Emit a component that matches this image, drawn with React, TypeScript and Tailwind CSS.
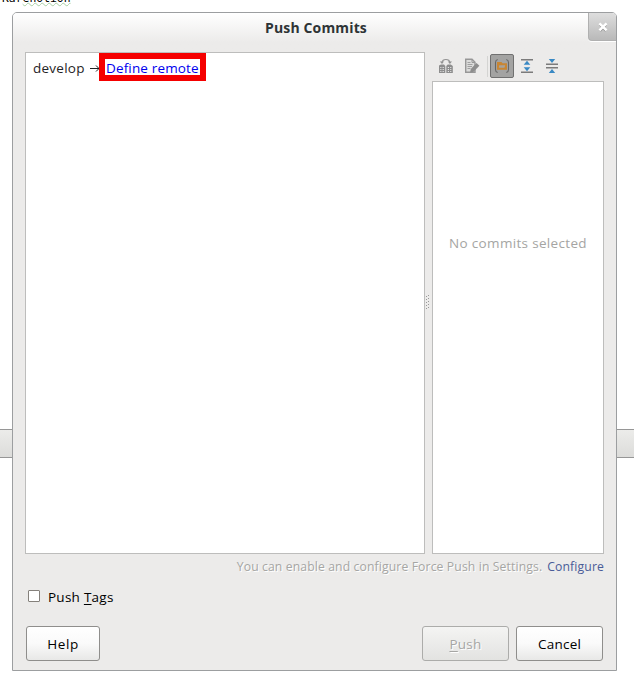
function CloseIcon() {
  return (
    <svg width="10" height="10" viewBox="0 0 10 10">
      <path d="M2 2.6L8 8.8M8 2.6L2 8.8" stroke="#8f8f8f" strokeWidth="2.4" />
      <path d="M1.4 1.4L8.6 8.4M8.6 1.4L1.4 8.4" stroke="#fff" strokeWidth="2.5" />
    </svg>
  );
}

function DiffIcon() {
  return (
    <svg width="16" height="16" viewBox="0 0 16 16" fill="none">
      <path d="M1 7.5L3 6.5H6L7.3 8V15H1ZM8.3 8L9.7 6.5H12.8L14.8 8V15H8.3Z" fill="#8d8d8d" />
      <path d="M2.3 9.5H3.4M4.6 9.5H5.8M2.3 11.5H3.4M4.6 11.5H5.8M2.3 13.5H3.4M4.6 13.5H5.8M9.8 9.5H11M12.2 9.5H13.3M9.8 11.5H11M12.2 11.5H13.3M9.8 13.5H11M12.2 13.5H13.3" stroke="#e6e6e6" />
      <path d="M4 4.5C4.3 2.4 5.5 1.5 7.9 1.5C10.3 1.5 11.6 2.4 11.9 4.5" stroke="#929292" strokeWidth="1.1" />
      <path d="M1.8 3.6H6L4 6ZM9.8 3.6H14L11.9 6Z" fill="#929292" />
    </svg>
  );
}

function EditIcon() {
  return (
    <svg width="16" height="16" viewBox="0 0 16 16" fill="none">
      <path d="M1.7 1.2H8L11 4.2V14.3H1.7Z" fill="#dcdcdb" stroke="#979797" strokeWidth="1.4" />
      <path d="M8 1.5V4.5H11" stroke="#979797" />
      <path d="M3.5 4.5H6.5M3.5 6.5H8.5M3.5 8.5H8M3.5 10.5H6.5" stroke="#a0a0a0" />
      <path d="M6 14.8L6.8 11L12.5 5L15.4 7.8L9.6 13.8Z" fill="#8d8d8d" />
    </svg>
  );
}

function GroupIcon() {
  return (
    <svg width="16" height="16" viewBox="0 0 16 16" fill="none">
      <path d="M3.7 1.5C1.7 2 1.5 3 1.5 4.5V11.5C1.5 13 1.7 14 3.7 14.5M12.3 1.5C14.3 2 14.5 3 14.5 4.5V11.5C14.5 13 14.3 14 12.3 14.5" stroke="#666" strokeWidth="1.1" />
      <path d="M3 4H7.5L8.5 5.2H13V11.7H3Z" fill="#c88532" />
      <path d="M5.2 7.2H11.2L10.5 9.8H4.8Z" fill="#a7a39c" />
    </svg>
  );
}

function ExpandIcon() {
  return (
    <svg width="14" height="14" viewBox="0 0 14 14">
      <path d="M1 0H13V1.5H1ZM1 12.5H13V14H1Z" fill="#7b7b7b" />
      <path d="M7 1.7L10.3 5.8H3.7ZM7 12.3L3.7 8.2H10.3Z" fill="#3989c4" />
    </svg>
  );
}

function CollapseIcon() {
  return (
    <svg width="14" height="14" viewBox="0 0 14 14">
      <path d="M1 4.4H13V5.9H1ZM1 8.1H13V9.6H1Z" fill="#7b7b7b" />
      <path d="M3.8 0H10.2L7 4ZM7 10L10.2 14H3.8Z" fill="#3989c4" />
    </svg>
  );
}

function Grip() {
  return (
    <svg width="5" height="16" viewBox="0 0 5 16">
      {[0, 3, 6, 9, 12].map((y) => (
        <g key={y} fill="#999">
          <rect x="3" y={y} width="1" height="1" />
          <rect x="1" y={y + 1} width="1" height="1" />
        </g>
      ))}
    </svg>
  );
}

function Backdrop() {
  return (
    <div className="flex h-[681px] flex-col">
      <div className="h-[429px]">
        <div className="-mt-[9px] ml-[2px] w-[70px] font-['DejaVu_Sans_Mono',monospace] text-[11.4px] leading-[15px] tracking-normal text-black">
          Kar<span className="underline decoration-[#a9cfa5] decoration-wavy decoration-1 underline-offset-0">enotion</span>
        </div>
      </div>
      <div className="h-[29px] border-y border-[#969696] bg-linear-to-b from-[#ececea] to-[#dcdcda]" />
    </div>
  );
}

export default function App() {
  return (
    <div className="relative h-[681px] w-[634px] overflow-hidden bg-white font-['Open_Sans','Noto_Sans',sans-serif] text-[13.5px] leading-[18px] tracking-[0.25px] text-black">
      <Backdrop />
      <div className="absolute top-[12px] left-[12px] flex h-[659px] w-[605px] flex-col rounded-t-[5px] border border-[#9c9ea0] bg-[#ecebea]">
        <header className="flex h-[39px] shrink-0 items-start rounded-t-[4px] bg-linear-to-b from-white to-[#ecebea] to-75%">
          <div className="w-[29px]" />
          <h1 className="flex-1 pt-[6px] pl-[2px] text-center text-[14px] font-bold tracking-[0.15px] text-[#2e3436]">Push Commits</h1>
          <button className="flex h-[28px] w-[28px] items-center justify-center rounded-tr-[4px] rounded-bl-[4px] border-b border-l border-[#b0b0b0] bg-linear-to-b from-[#dedede] to-[#b9b9b9] shadow-[0_1px_0_#fff]">
            <CloseIcon />
          </button>
        </header>

        <main className="flex h-[502px] shrink-0 px-[12px]">
          <section className="flex w-[400px] items-start border border-[#bdbdbc] bg-white pl-[7px] text-[#1f2325]">
            <span className="w-[57px] pt-[6px] whitespace-nowrap">develop</span>
            <svg className="mt-[11px]" width="9" height="9" viewBox="0 0 9 9" fill="none" stroke="#1f2325">
              <path d="M0 4.5H9M6 1.5L9 4.5L6 7.5" />
            </svg>
            <div className="flex h-[28px] w-[107px] items-center border-6 border-[#f50000] pl-px text-[#0000ee]">
              <span className="pt-px tracking-[0.15px] whitespace-nowrap">Define remote</span>
            </div>
          </section>
          <div className="flex w-[7px] items-center"><Grip /></div>
          <section className="flex w-[172px] flex-col">
            <div className="flex h-[29px] items-start pl-[6px]">
              <div className="pt-[6px]"><DiffIcon /></div>
              <div className="pt-[6px] pl-[10px]"><EditIcon /></div>
              <div className="mt-[4px] ml-[7px] h-[21px] w-px bg-[#d4d4d2]" />
              <div className="mt-[2px] ml-[2px] flex h-[24px] w-[24px] items-center justify-center rounded-[2px] border border-[#707070] bg-[#a3a3a2]"><GroupIcon /></div>
              <div className="pt-[7px] pl-[6px]"><ExpandIcon /></div>
              <div className="pt-[7px] pl-[11px]"><CollapseIcon /></div>
            </div>
            <div className="flex-1 border border-[#bdbdbc] bg-white pt-[152px] text-center tracking-[0.33px] whitespace-nowrap text-[#a5a5a3]">No commits selected</div>
          </section>
        </main>

        <div className="flex h-[24px] shrink-0 items-center justify-end gap-[5px] pt-px pr-[12px] text-[12.2px] whitespace-nowrap">
          <span className="tracking-[0.12px] text-[#a6a6a4] [text-shadow:1px_1px_0_#fff]">You can enable and configure Force Push in Settings.</span>
          <span className="tracking-[0.13px] text-[#4a5c98]">Configure</span>
        </div>

        <div className="flex h-[38px] shrink-0 items-center gap-[8px] pl-[15px]">
          <div className="mb-[2px] h-[12px] w-[12px] rounded-[1px] border border-[#85817c] bg-white" />
          <label>Push <span className="underline underline-offset-2">T</span>ags</label>
        </div>

        <footer className="flex h-[45px] shrink-0 items-end px-[13px]">
          <button className="h-[35px] w-[74px] rounded-[3px] border border-[#8f8e8c] bg-linear-to-b from-white via-[#fafafa] to-[#e8e8e7] pt-px tracking-[0.6px]">Help</button>
          <div className="flex-1" />
          <button className="mr-[7px] h-[35px] w-[87px] rounded-[3px] border border-[#acacaa] bg-linear-to-b from-[#f4f4f3] to-[#e3e3e1] pt-px text-[#a6a6a4] [text-shadow:1px_1px_0_#fff]"><span className="underline underline-offset-2">P</span>ush</button>
          <button className="h-[35px] w-[87px] rounded-[3px] border border-[#8f8e8c] bg-linear-to-b from-white via-[#fafafa] to-[#e8e8e7] pt-px">Cancel</button>
        </footer>
      </div>
    </div>
  );
}
